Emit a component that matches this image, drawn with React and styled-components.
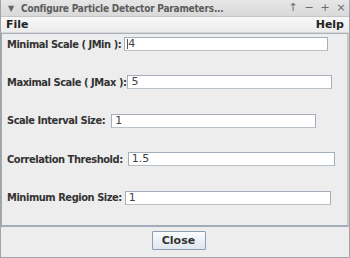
import React from "react";
import styled, { createGlobalStyle } from "styled-components";

const Global = createGlobalStyle`
  html, body { margin: 0; padding: 0; background: #ededed; }
  body { font-family: "DejaVu Sans", "Liberation Sans", sans-serif; }
  * { box-sizing: border-box; }
`;

const Window = styled.div`
  width: 350px;
  height: 258px;
  display: flex;
  flex-direction: column;
  background: #ededed;
  border-left: 1px solid #a4a4a4;
  border-right: 1px solid #a4a4a4;
  border-bottom: 1px solid #a4a4a4;
  overflow: hidden;
`;

const TitleBar = styled.div`
  height: 17px;
  flex: none;
  display: flex;
  align-items: center;
  padding: 0 2px 0 6px;
  background: linear-gradient(#e6e6e6, #d9d9d9);
  border-bottom: 1px solid #c4c4c4;
  border-top-left-radius: 3px;
  border-top-right-radius: 3px;
  color: #5c5c5c;
`;

const TitleArrow = styled.span`
  font-size: 8px;
  width: 13px;
  margin-left: 1px;
  color: #666;
`;

const TitleText = styled.span`
  font-family: "DejaVu Sans Condensed", "DejaVu Sans", sans-serif;
  font-stretch: condensed;
  font-weight: bold;
  font-size: 10px;
  letter-spacing: -0.2px;
  flex: 1;
  white-space: nowrap;
`;

const TitleButtons = styled.div`
  display: flex;
  gap: 4px;
`;

const TitleButton = styled.span`
  width: 12px;
  text-align: center;
  font-size: 11px;
  line-height: 12px;
  color: #6a6a6a;
`;

const MenuBar = styled.div`
  height: 16px;
  flex: none;
  display: flex;
  align-items: center;
  justify-content: space-between;
  padding: 0 5px 0 5px;
  background: linear-gradient(#f7f7f7, #ececec);
  border-bottom: 1px solid #d6d6d6;
`;

const MenuItem = styled.span`
  font-weight: bold;
  font-size: 11px;
  color: #222;
`;

const FormPanel = styled.div`
  height: 194px;
  flex: none;
  display: flex;
  flex-direction: column;
  gap: 18.4px;
  padding: 0 0 0 5px;
  border-top: 1px solid #a9b2bc;
  border-left: 1px solid #9eaab6;
  border-bottom: 2px solid #a3adb9;
  border-right: 2px solid #c8c8c8;
  background: #ededed;
`;

const Row = styled.div`
  height: 20px;
  display: flex;
  align-items: center;
  gap: ${(p) => p.$gap}px;
`;

const Label = styled.span`
  font-family: "DejaVu Sans Condensed", "DejaVu Sans", sans-serif;
  font-stretch: condensed;
  font-weight: bold;
  font-size: 11px;
  letter-spacing: -0.45px;
  color: #333;
  white-space: nowrap;
`;

const Field = styled.div`
  position: relative;
  width: ${(p) => p.$w}px;
  height: 14px;
  background: #fff;
  border: 1px solid #a5afba;
  border-bottom-color: #b8c0c8;
  font-size: 11px;
  line-height: 12px;
  color: #444;
  padding-left: 3px;
`;

const Caret = styled.span`
  position: absolute;
  left: 2px;
  top: 1px;
  width: 1px;
  height: 10px;
  background: #555;
`;

const Footer = styled.div`
  flex: 1;
  display: flex;
  align-items: center;
  justify-content: center;
  padding: 0 0 3px 7px;
`;

const Button = styled.button`
  width: 54px;
  height: 19px;
  padding: 0;
  font-family: "DejaVu Sans", sans-serif;
  font-weight: bold;
  font-size: 11px;
  color: #333;
  background: linear-gradient(#fbfcfd, #dfe6ee);
  border: 1px solid #8e9fb3;
  border-radius: 1px;
`;

const rows = [
  { label: "Minimal Scale ( JMin ):", value: "4", w: 204, gap: 3, focus: true },
  { label: "Maximal Scale ( JMax ):", value: "5", w: 205, gap: 1 },
  { label: "Scale Interval Size:", value: "1", w: 205, gap: 6 },
  { label: "Correlation Threshold:", value: "1.5", w: 207, gap: 5 },
  { label: "Minimum Region Size:", value: "1", w: 206, gap: 3 },
];

export default function App() {
  return (
    <>
      <Global />
      <Window>
        <TitleBar>
          <TitleArrow>▼</TitleArrow>
          <TitleText>Configure Particle Detector Parameters...</TitleText>
          <TitleButtons>
            <TitleButton>↑</TitleButton>
            <TitleButton>−</TitleButton>
            <TitleButton>+</TitleButton>
            <TitleButton>×</TitleButton>
          </TitleButtons>
        </TitleBar>
        <MenuBar>
          <MenuItem>File</MenuItem>
          <MenuItem>Help</MenuItem>
        </MenuBar>
        <FormPanel>
          {rows.map((r) => (
            <Row key={r.label} $gap={r.gap}>
              <Label>{r.label}</Label>
              <Field $w={r.w}>
                {r.focus && <Caret />}
                {r.value}
              </Field>
            </Row>
          ))}
        </FormPanel>
        <Footer>
          <Button>Close</Button>
        </Footer>
      </Window>
    </>
  );
}
